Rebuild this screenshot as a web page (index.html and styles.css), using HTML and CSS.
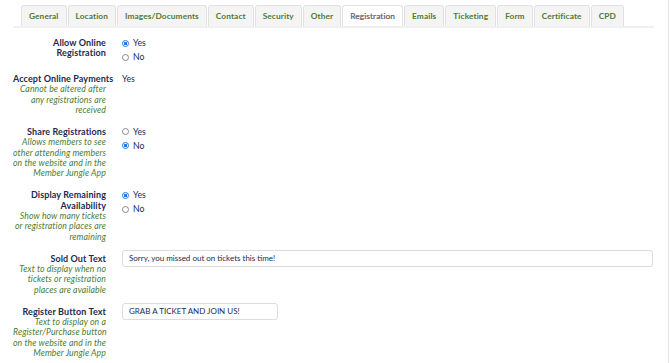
FILE: index.html
```html
<!DOCTYPE html>
<html>
<head>
	<title>Event | Registration</title>
	<meta charset="utf-8">
	<link rel="stylesheet" href="styles.css">
</head>
<body>
<div class="page">
	<!-- tabs -->
	<div class="tabs">
		<span class="tab">General</span>
		<span class="tab">Location</span>
		<span class="tab">Images/Documents</span>
		<span class="tab">Contact</span>
		<span class="tab">Security</span>
		<span class="tab">Other</span>
		<span class="tab active">Registration</span>
		<span class="tab">Emails</span>
		<span class="tab">Ticketing</span>
		<span class="tab">Form</span>
		<span class="tab">Certificate</span>
		<span class="tab">CPD</span>
	</div>

	<div class="form">
		<div class="row">
			<div class="label"><b>Allow Online<br>Registration</b></div>
			<div class="field">
				<label class="radio"><input type="radio" name="online" checked> Yes</label>
				<label class="radio"><input type="radio" name="online"> No</label>
			</div>
		</div>

		<div class="row">
			<div class="label"><b>Accept Online Payments</b>
				<i>Cannot be altered after<br>any registrations are<br>received</i></div>
			<div class="field"><span class="plain">Yes</span></div>
		</div>

		<div class="row">
			<div class="label"><b>Share Registrations</b>
				<i>Allows members to see<br>other attending members<br>on the website and in the<br>Member Jungle App</i></div>
			<div class="field">
				<label class="radio"><input type="radio" name="share"> Yes</label>
				<label class="radio"><input type="radio" name="share" checked> No</label>
			</div>
		</div>

		<div class="row">
			<div class="label"><b>Display Remaining<br>Availability</b>
				<i>Show how many tickets<br>or registration places are<br>remaining</i></div>
			<div class="field">
				<label class="radio"><input type="radio" name="remain" checked> Yes</label>
				<label class="radio"><input type="radio" name="remain"> No</label>
			</div>
		</div>

		<div class="row">
			<div class="label"><b>Sold Out Text</b>
				<i>Text to display when no<br>tickets or registration<br>places are available</i></div>
			<div class="field"><input class="text wide" type="text" value="Sorry, you missed out on tickets this time!"></div>
		</div>

		<div class="row">
			<div class="label"><b>Register Button Text</b>
				<i>Text to display on a<br>Register/Purchase button<br>on the website and in the<br>Member Jungle App</i></div>
			<div class="field"><input class="text short" type="text" value="GRAB A TICKET AND JOIN US!"></div>
		</div>
	</div>
</div>
</body>
</html>
```

FILE: styles.css
```css
html,body{
	margin: 0;
	padding: 0;
	background: #fff;
}

body{
	font-family: Lato, "Open Sans", sans-serif;
	font-size: 8.5px;
	color: #1d2a4d;
}

.page{
	width: 669px;
	height: 363px;
	border-right: 1px solid #e6e6e6;
	padding: 5px 0 0 13px;
	box-sizing: border-box;
	overflow: hidden;
}

/* tab strip */
.tabs{
	display: flex;
	gap: 1px;
	width: 641px;
	padding-left: 8px;
	box-sizing: border-box;
	border-bottom: 2px solid #f0f0f0;
}
.tab{
	height: 20px;
	line-height: 20px;
	padding: 0 7px;
	background: #f4f4f4;
	border: 1px solid #e2e2e2;
	border-bottom: none;
	border-radius: 3px 3px 0 0;
	color: #4d7a33;
	font-weight: bold;
	font-size: 8.3px;
	letter-spacing: 0.1px;
}
.tab.active{
	background: #fff;
	color: #5a5a5a;
	font-weight: normal;
	-webkit-text-stroke: 0.2px #5a5a5a;
}

/* form rows */
.form{
	padding-top: 10px;
}
.row{
	display: grid;
	grid-template-columns: 93px 1fr;
	column-gap: 16px;
	width: 641px;
	margin-bottom: 11.4px;
	line-height: 10.4px;
}
.label{
	text-align: right;
	white-space: nowrap;
}
.label b{
	display: block;
	font-weight: bold;
	font-size: 9px;
	letter-spacing: 0.1px;
	color: #1d2a4d;
}
.label i{
	display: block;
	color: #4a7c35;
	font-size: 8.7px;
	letter-spacing: 0.1px;
}
.field{
	display: flex;
	flex-direction: column;
	gap: 3.6px;
}
.plain{
	font-size: 8.7px;
}

.radio{
	display: flex;
	align-items: center;
	gap: 4px;
	height: 10.4px;
	font-size: 8.7px;
}
.radio input{
	appearance: none;
	-webkit-appearance: none;
	margin: 0;
	width: 7px;
	height: 7px;
	border: 1px solid #8a8a8a;
	border-radius: 50%;
	box-sizing: border-box;
	background: #fff;
}
.radio input:checked{
	border-color: #2a74e0;
	background: radial-gradient(circle, #2a74e0 0 1.6px, #fff 2px);
}

.text{
	margin-top: -4px;
	height: 17px;
	border: 1px solid #dcdcdc;
	border-radius: 3px;
	padding: 0 6px;
	box-sizing: border-box;
	font-family: Lato, "Open Sans", sans-serif;
	font-size: 8px;
	color: #1d2a4d;
	outline: none;
}
.text.wide{
	width: 531px;
}
.text.short{
	width: 156px;
}
```
